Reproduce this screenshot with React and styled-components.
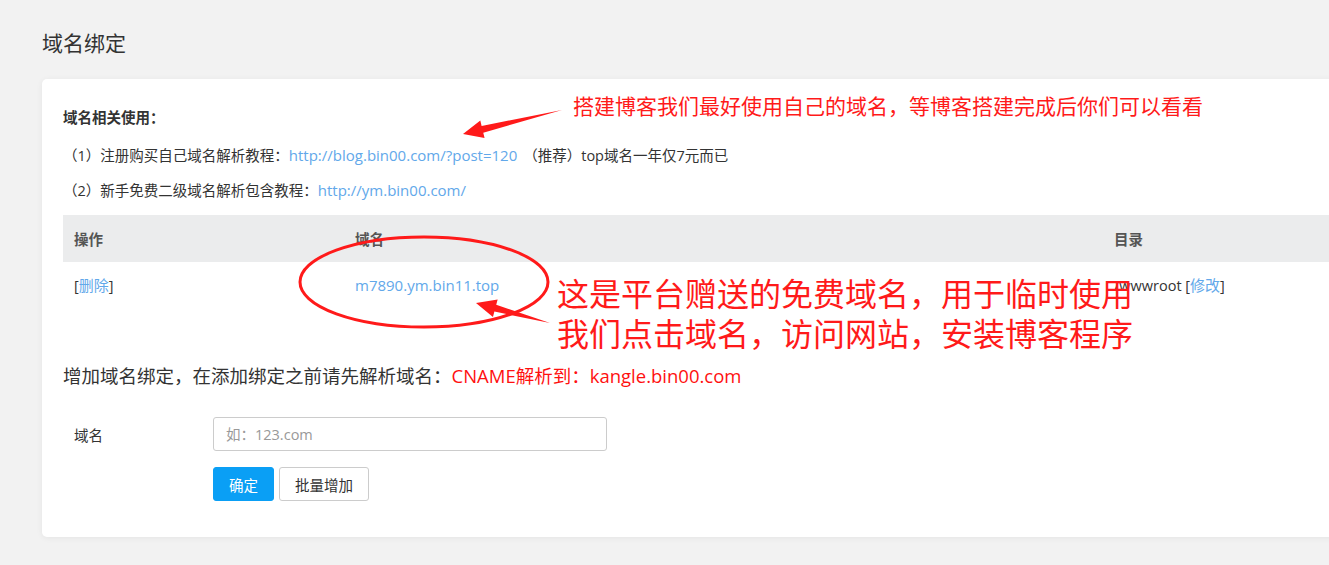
import React from 'react';
import styled, { createGlobalStyle } from 'styled-components';

const GlobalStyle = createGlobalStyle`
  html, body {
    margin: 0;
    padding: 0;
    background: #f2f2f2;
    overflow: hidden;
  }
  body {
    font-family: "Open Sans", "Noto Sans CJK SC", sans-serif;
    color: #333;
  }
`;

const Page = styled.div`
  position: relative;
  width: 1329px;
  height: 565px;
  padding: 30px 0 0 42px;
  box-sizing: border-box;
`;

const Title = styled.h2`
  margin: 0 0 23px;
  font-size: 21px;
  line-height: 26px;
  font-weight: normal;
  color: #333;
`;

const Card = styled.div`
  width: 1380px;
  background: #fff;
  border-radius: 5px;
  box-shadow: 0 1px 6px rgba(0, 0, 0, 0.06);
  padding: 29px 21px 36px;
  box-sizing: border-box;
`;

const Heading = styled.div`
  font-size: 14.5px;
  font-weight: bold;
  line-height: 20px;
  margin-bottom: 10px;
`;

const InfoLine = styled.div`
  font-size: 14.5px;
  line-height: 35px;
  color: #333;
`;

const Link = styled.a`
  color: #62a8ea;
  font-size: 15px;
  text-decoration: none;
  margin: ${p => p.$gap || '0'};
`;

const Table = styled.table`
  width: 100%;
  margin-top: 7px;
  border-collapse: collapse;
  font-size: 14.5px;
`;

const Th = styled.th`
  background: #ebeced;
  height: 47px;
  padding: 0 11px;
  text-align: left;
  font-weight: bold;
  color: #555;
  width: ${p => p.$w || 'auto'};
`;

const Td = styled.td`
  height: 45px;
  padding: 0 11px;
  color: #333;
`;

const Notice = styled.div`
  margin-top: 57px;
  font-size: 18.5px;
  line-height: 24px;
  color: #333;
`;

const Red = styled.span`
  color: #ff1010;
`;

const FormRow = styled.div`
  display: flex;
  align-items: center;
  margin-top: ${p => p.$top || '0'};
  padding-left: ${p => (p.$indent ? '150px' : '0')};
  gap: ${p => p.$gap || '0'};
`;

const Label = styled.label`
  width: 150px;
  padding-left: 11px;
  box-sizing: border-box;
  font-size: 14.5px;
  color: #333;
`;

const Input = styled.input`
  width: 394px;
  height: 34px;
  box-sizing: border-box;
  border: 1px solid #ccc;
  border-radius: 3px;
  padding: 0 12px;
  font-size: 14.5px;
  font-family: inherit;
  outline: none;
  &::placeholder {
    color: #999;
  }
`;

const Button = styled.button`
  height: 34px;
  padding: 0 15px;
  font-size: 14.5px;
  font-family: inherit;
  border-radius: 3px;
  border: 1px solid ${p => (p.$primary ? '#0a9ff5' : '#ccc')};
  background: ${p => (p.$primary ? '#0a9ff5' : '#fff')};
  color: ${p => (p.$primary ? '#fff' : '#333')};
  cursor: pointer;
`;

const Overlay = styled.div`
  position: absolute;
  inset: 0;
  pointer-events: none;
`;

const Note = styled.div`
  position: absolute;
  left: ${p => p.$x}px;
  top: ${p => p.$y}px;
  color: #ff1a1a;
  font-family: "Noto Sans CJK SC", sans-serif;
  font-size: ${p => p.$size}px;
  line-height: ${p => p.$lh}px;
  white-space: nowrap;
`;

const Marks = styled.svg`
  position: absolute;
  left: 0;
  top: 0;
`;

const arrow = (x1, y1, x2, y2, w = 7, head = 20, hw = 9) => {
  // tapered arrow from tail (x1,y1) to tip (x2,y2)
  const dx = x2 - x1;
  const dy = y2 - y1;
  const len = Math.hypot(dx, dy);
  const ux = dx / len;
  const uy = dy / len;
  const nx = -uy;
  const ny = ux;
  const bx = x2 - ux * head;
  const by = y2 - uy * head;
  const pts = [
    [x1, y1],
    [bx + nx * (w / 2), by + ny * (w / 2)],
    [bx + nx * hw, by + ny * hw],
    [x2, y2],
    [bx - nx * hw, by - ny * hw],
    [bx - nx * (w / 2), by - ny * (w / 2)],
  ];
  return pts.map(p => p.join(',')).join(' ');
};

export default function App() {
  return (
    <>
      <GlobalStyle />
      <Page>
        <Title>域名绑定</Title>
        <Card>
          <Heading>域名相关使用：</Heading>
          <InfoLine>
            （1）注册购买自己域名解析教程：
            <Link href="#" $gap="0 6px 0 0">http://blog.bin00.com/?post=120</Link>
            （推荐）top域名一年仅7元而已
          </InfoLine>
          <InfoLine>
            （2）新手免费二级域名解析包含教程：
            <Link href="#">http://ym.bin00.com/</Link>
          </InfoLine>
          <Table>
            <thead>
              <tr>
                <Th $w="259px">操作</Th>
                <Th $w="737px">域名</Th>
                <Th>目录</Th>
              </tr>
            </thead>
            <tbody>
              <tr>
                <Td>[<Link href="#">删除</Link>]</Td>
                <Td><Link href="#">m7890.ym.bin11.top</Link></Td>
                <Td>/wwwroot [<Link href="#">修改</Link>]</Td>
              </tr>
            </tbody>
          </Table>
          <Notice>
            增加域名绑定，在添加绑定之前请先解析域名：<Red>CNAME解析到：kangle.bin00.com</Red>
          </Notice>
          <FormRow $top="29px">
            <Label>域名</Label>
            <Input placeholder="如：123.com" />
          </FormRow>
          <FormRow $top="16px" $gap="5px" $indent>
            <Button $primary>确定</Button>
            <Button>批量增加</Button>
          </FormRow>
        </Card>
        <Overlay>
          <Note $x={573} $y={92} $size={21} $lh={26}>
            搭建博客我们最好使用自己的域名，等博客搭建完成后你们可以看看
          </Note>
          <Note $x={557} $y={272} $size={32} $lh={40}>
            这是平台赠送的免费域名，用于临时使用
            <br />
            我们点击域名，访问网站，安装博客程序
          </Note>
          <Marks width="1329" height="565">
            <polygon points={arrow(562, 110, 463, 134)} fill="#ff1a1a" />
            <ellipse cx="424" cy="282" rx="124" ry="45" fill="none" stroke="#ff1a1a" strokeWidth="3" />
            <polygon points={arrow(550, 323, 476, 303)} fill="#ff1a1a" />
          </Marks>
        </Overlay>
      </Page>
    </>
  );
}
